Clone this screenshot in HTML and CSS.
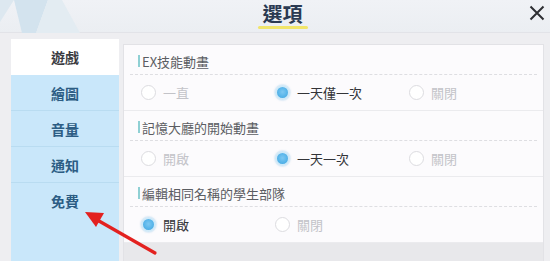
FILE: index.html
```html
<!DOCTYPE html>
<html lang="zh-Hant">
<head>
    <meta charset="UTF-8">
    <meta name="viewport" content="width=device-width, initial-scale=1.0">
    <title>選項</title>
    <link rel="stylesheet" href="styles.css">
</head>
<body>
    <div class="screen">
        <div class="edge"></div>
        <div class="window">
            <header class="titlebar">
                <svg class="deco" width="110" height="33" viewBox="0 0 110 33">
                    <polygon points="0,0 14,0 0,22" fill="#dde8f0"/>
                    <polygon points="14,0 48,0 36,33 22,33" fill="#d3e3ee"/>
                    <polygon points="48,0 62,0 80,33 36,33" fill="#e3ecf2"/>
                </svg>
                <h1 class="title">選項</h1>
                <button class="close" aria-label="close">
                    <svg width="16" height="16" viewBox="0 0 16 16">
                        <path d="M1.5 1.5 L14.5 14.5 M14.5 1.5 L1.5 14.5" stroke="#2e2f33" stroke-width="2" fill="none"/>
                    </svg>
                </button>
            </header>

            <div class="body">
                <nav class="tabs">
                    <div class="tab active">遊戲</div>
                    <div class="tab">繪圖</div>
                    <div class="tab">音量</div>
                    <div class="tab">通知</div>
                    <div class="tab">免費</div>
                </nav>

                <main class="options">
                    <section class="group">
                        <div class="group-head"><span class="mark"></span>EX技能動畫</div>
                        <div class="choices">
                            <label class="choice"><span class="radio"></span>一直</label>
                            <label class="choice on"><span class="radio"></span>一天僅一次</label>
                            <label class="choice"><span class="radio"></span>關閉</label>
                        </div>
                    </section>
                    <section class="group">
                        <div class="group-head"><span class="mark"></span>記憶大廳的開始動畫</div>
                        <div class="choices">
                            <label class="choice"><span class="radio"></span>開啟</label>
                            <label class="choice on"><span class="radio"></span>一天一次</label>
                            <label class="choice"><span class="radio"></span>關閉</label>
                        </div>
                    </section>
                    <section class="group">
                        <div class="group-head"><span class="mark"></span>編輯相同名稱的學生部隊</div>
                        <div class="choices">
                            <label class="choice on"><span class="radio"></span>開啟</label>
                            <label class="choice"><span class="radio"></span>關閉</label>
                        </div>
                    </section>
                </main>
            </div>
        </div>

        <!-- red pointer drawn over the screenshot -->
        <svg class="pointer" width="80" height="50" viewBox="0 0 80 50">
            <line x1="76" y1="46" x2="20" y2="14" stroke="#e3211f" stroke-width="3.2" stroke-linecap="round"/>
            <polygon points="6,5 25,6 17,20" fill="#e3211f"/>
        </svg>
    </div>
</body>
</html>
```

FILE: styles.css
```css
:root {
    --title-ink: #2b3a52;
    --tab-blue: #c9e7fa;
    --tab-ink: #2c5d84;
    --radio-blue: #58b5ea;
    --muted: #c3c3c8;
}

* {
    margin: 0;
    padding: 0;
    box-sizing: border-box;
    font-family: 'Noto Sans CJK TC', 'Noto Sans', sans-serif;
}

body {
    width: 550px;
    height: 261px;
    overflow: hidden;
    background: #f2f2f5;
}

.screen {
    position: relative;
    display: flex;
    width: 550px;
    height: 261px;
}

.edge {
    width: 4px;
    background: linear-gradient(#8a8d92 0, #8a8d92 30px, #2b2b2e 40px, #1e1e21 100%);
}

.window {
    flex: 1;
    display: flex;
    flex-direction: column;
    background: #eeeef1;
}

.titlebar {
    position: relative;
    height: 33px;
    display: flex;
    align-items: flex-start;
    justify-content: center;
    background: linear-gradient(#f0f2f6, #ebeef2);
    border-bottom: 1px solid #e2e3e8;
}

.deco {
    position: absolute;
    left: 0;
    top: 0;
}

.title {
    position: relative;
    margin-left: 12px;
    padding: 1px 2px 0;
    height: 31px;
    font-size: 20px;
    line-height: 26px;
    font-weight: 700;
    color: var(--title-ink);
}

.title::after {
    content: '';
    position: absolute;
    left: -3px;
    right: -3px;
    bottom: 2px;
    height: 3px;
    border-radius: 2px;
    background: #f1e56a;
}

.close {
    position: absolute;
    right: 8px;
    top: 5px;
    width: 16px;
    height: 16px;
    border: none;
    background: transparent;
}

.body {
    flex: 1;
    display: flex;
    gap: 4px;
    padding: 6px 9px 0 11px;
    min-height: 0;
}

.tabs {
    width: 108px;
    background: var(--tab-blue);
    display: flex;
    flex-direction: column;
}

.tab {
    height: 36px;
    flex-shrink: 0;
    display: flex;
    align-items: center;
    justify-content: center;
    font-size: 14px;
    font-weight: 700;
    color: var(--tab-ink);
}

.tab + .tab:not(:last-child) {
    border-bottom: 1px solid #b9dcf1;
}

.tab.active {
    background: #ffffff;
    color: #3a3b3f;
}

.options {
    flex: 1;
    margin-top: 5px;
    background: #e8e8eb;
    border: 1px solid #e2e2e6;
    border-bottom: none;
}

.group {
    height: 66px;
    background: #fcfbfd;
    border-bottom: 1px solid #ebebee;
}

.group-head {
    height: 30px;
    margin: 0 6px;
    padding: 3px 0 0 8px;
    display: flex;
    align-items: center;
    font-size: 13px;
    color: #5b5d62;
    border-bottom: 1px dashed #dedee2;
}

.mark {
    width: 2px;
    height: 12px;
    margin-right: 2px;
    background: #8fd0d4;
}

.choices {
    height: 35px;
    display: flex;
    align-items: center;
    padding-left: 17px;
}

.choice {
    width: 134px;
    display: flex;
    align-items: center;
    gap: 7px;
    font-size: 13px;
    color: var(--muted);
}

.radio {
    width: 15px;
    height: 15px;
    border-radius: 50%;
    border: 1.5px solid #dcdce0;
    background: #ffffff;
}

.choice.on {
    color: #333438;
}

.choice.on .radio {
    border: 2px solid #cfe9f8;
    background: radial-gradient(circle at 50% 45%, #7cc8f2 0, var(--radio-blue) 55%, #3fa3dc 100%);
    box-shadow: 0 0 2px rgba(60, 150, 210, 0.5);
}

.pointer {
    position: absolute;
    left: 79px;
    top: 207px;
}
```
